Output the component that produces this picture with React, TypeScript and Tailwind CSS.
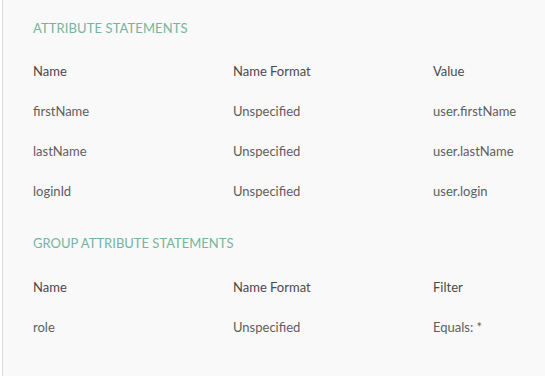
export default function App() {
  const attrs = [
    ['firstName', 'Unspecified', 'user.firstName'],
    ['lastName', 'Unspecified', 'user.lastName'],
    ['loginId', 'Unspecified', 'user.login'],
  ];
  const groups = [['role', 'Unspecified', 'Equals: *']];

  const Row = ({ cells, head }: { cells: string[]; head?: boolean }) => (
    <div className={`grid grid-cols-[200px_200px_1fr] h-[40px] items-center ${head ? 'text-[#4a4a4a]' : 'text-[#5e5e5e]'}`}>
      {cells.map((c, i) => (
        <div key={i}>{c}</div>
      ))}
    </div>
  );

  return (
    <div className="w-[545px] h-[379px] bg-white pl-[2px] pb-[3px]" style={{ fontFamily: 'Lato, "Open Sans", sans-serif' }}>
      <div className="h-full bg-[#f9f9f9] border-l border-[#dcdcdc] pl-[30px] pt-[19px] text-[13px]">
        <div className="text-[#74b59d] text-[13px] tracking-[0.1px] h-[20px] flex items-center">ATTRIBUTE STATEMENTS</div>
        <div className="mt-[13px]">
          <Row cells={['Name', 'Name Format', 'Value']} head />
          {attrs.map((r) => (
            <Row key={r[0]} cells={r} />
          ))}
        </div>
        <div className="text-[#74b59d] text-[13px] h-[20px] flex items-center mt-[22px]">GROUP ATTRIBUTE STATEMENTS</div>
        <div className="mt-[14px]">
          <Row cells={['Name', 'Name Format', 'Filter']} head />
          {groups.map((r) => (
            <Row key={r[0]} cells={r} />
          ))}
        </div>
      </div>
    </div>
  );
}
